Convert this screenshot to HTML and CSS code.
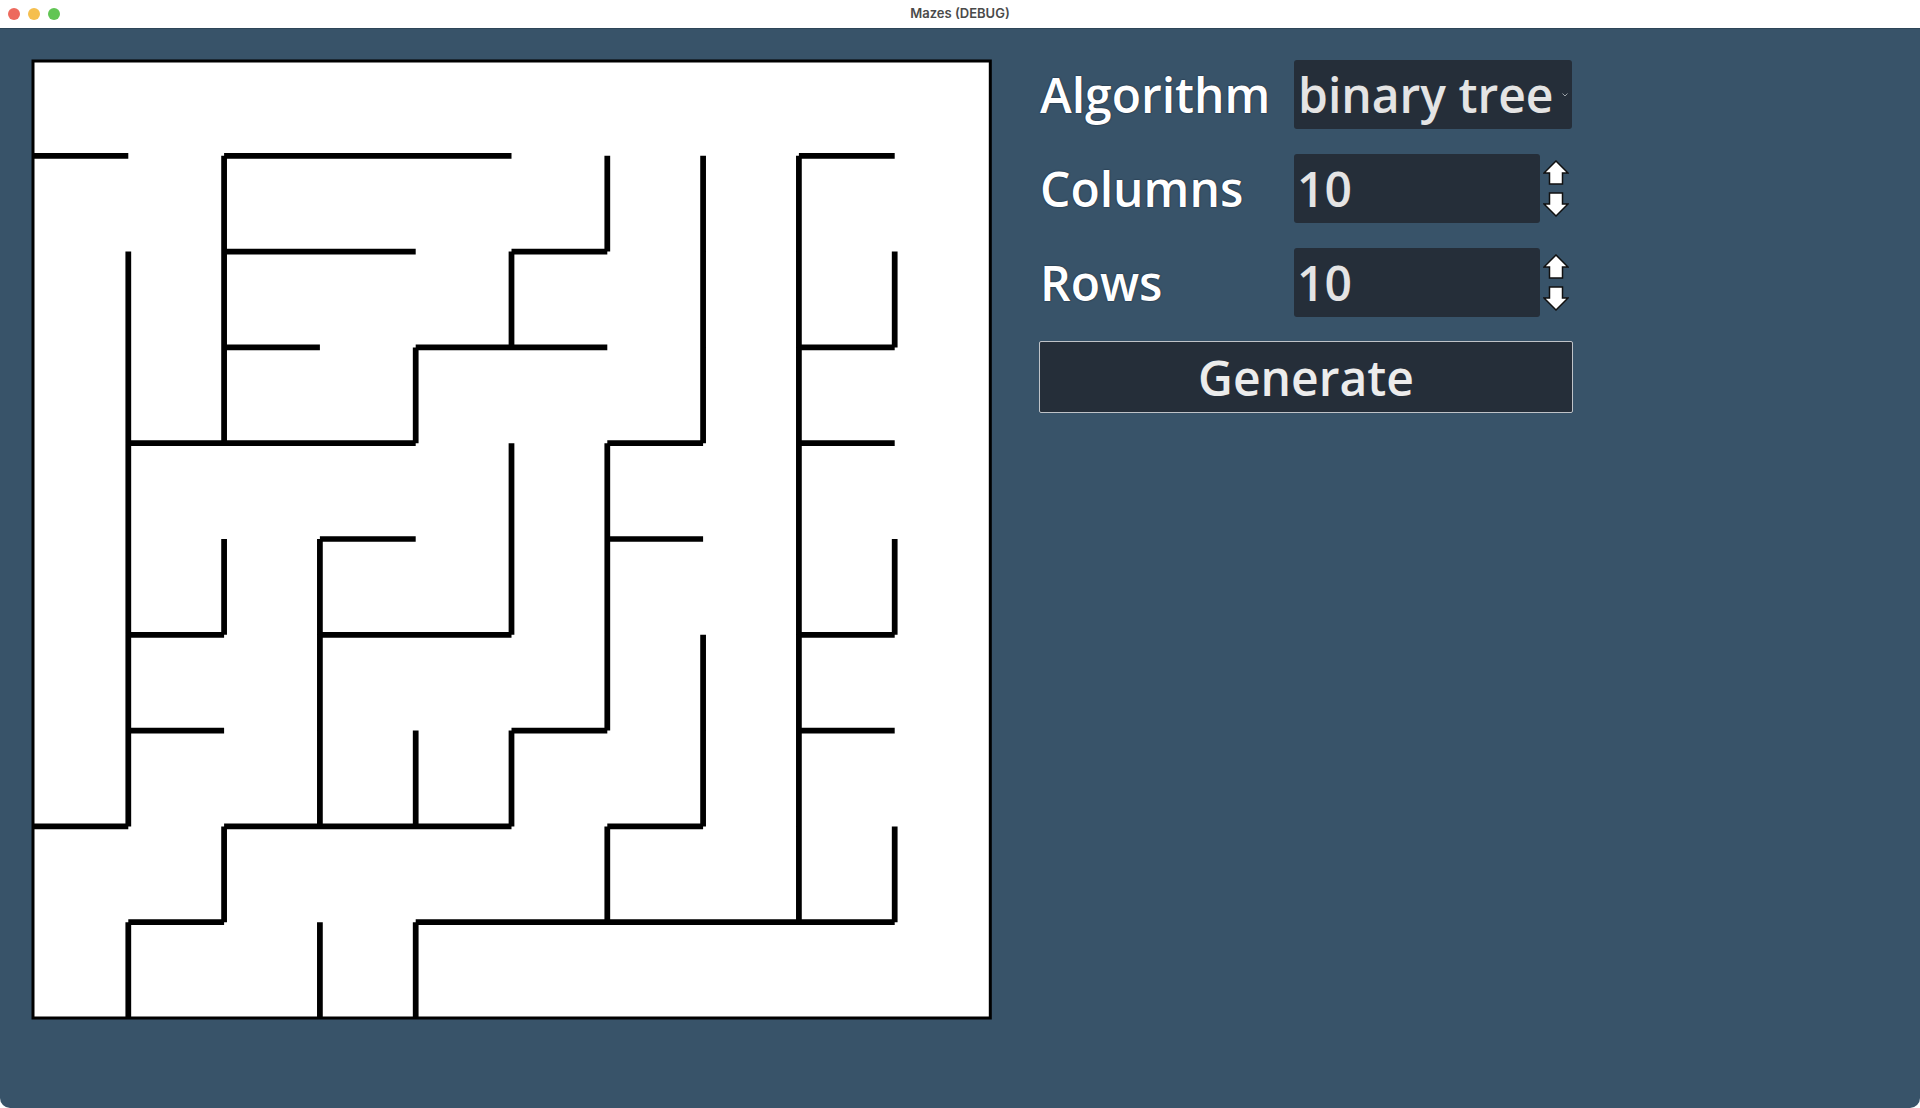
FILE: index.html
```html
<!DOCTYPE html>
<html lang="en">
<head>
<meta charset="utf-8">
<title>Mazes (DEBUG)</title>
<link rel="stylesheet" href="styles.css">
</head>
<body>
<div class="window">
  <header class="titlebar">
    <div class="lights">
      <span class="light red"></span>
      <span class="light yellow"></span>
      <span class="light green"></span>
    </div>
    <div class="title">Mazes (DEBUG)</div>
  </header>
  <main class="content">
    <svg class="maze" width="964" height="964" viewBox="0 0 964 964">
      <rect x="3" y="3" width="957.3" height="957" fill="#ffffff" stroke="#000000" stroke-width="3"/>
      <g transform="translate(2.5 2) scale(95.8)" fill="none" stroke="#000000" stroke-width="0.06" stroke-linecap="butt">
        <path d="M0 1H1 M2 1H5 M8 1H9
                 M2 2H4 M5 2H6
                 M2 3H3 M4 3H6 M8 3H9
                 M1 4H4 M6 4H7 M8 4H9
                 M3 5H4 M6 5H7
                 M1 6H2 M3 6H5 M8 6H9
                 M1 7H2 M5 7H6 M8 7H9
                 M0 8H1 M2 8H5 M6 8H7
                 M1 9H2 M4 9H9"/>
        <path d="M1 2V8 M1 9V10
                 M2 1V4 M2 5V6 M2 8V9
                 M3 5V8 M3 9V10
                 M4 3V4 M4 7V8 M4 9V10
                 M5 2V3 M5 4V6 M5 7V8
                 M6 1V2 M6 4V7 M6 8V9
                 M7 1V4 M7 6V8
                 M8 1V9
                 M9 2V3 M9 5V6 M9 8V9"/>
      </g>
    </svg>
    <section class="panel">
      <div class="row">
        <div class="label">Algorithm</div>
        <div class="option">
          <span class="value">binary tree</span>
          <svg class="chevron" width="6" height="4" viewBox="0 0 6 4"><path d="M0.5 0.5 L3 3 L5.5 0.5" fill="none" stroke="#9aa0a6" stroke-width="1"/></svg>
        </div>
      </div>
      <div class="row">
        <div class="label">Columns</div>
        <div class="spin">
          <div class="spinbox"><span class="value">10</span></div>
          <svg class="arrows" width="26" height="58" viewBox="0 0 26 58">
            <polygon points="13,1 25,13 19.5,13 19.5,24 6.5,24 6.5,13 1,13" fill="#ffffff" stroke="#111111" stroke-width="1.5" stroke-linejoin="miter"/>
            <polygon points="6.5,33 19.5,33 19.5,44 25,44 13,56 1,44 6.5,44" fill="#ffffff" stroke="#111111" stroke-width="1.5" stroke-linejoin="miter"/>
          </svg>
        </div>
      </div>
      <div class="row">
        <div class="label">Rows</div>
        <div class="spin">
          <div class="spinbox"><span class="value">10</span></div>
          <svg class="arrows" width="26" height="58" viewBox="0 0 26 58">
            <polygon points="13,1 25,13 19.5,13 19.5,24 6.5,24 6.5,13 1,13" fill="#ffffff" stroke="#111111" stroke-width="1.5" stroke-linejoin="miter"/>
            <polygon points="6.5,33 19.5,33 19.5,44 25,44 13,56 1,44 6.5,44" fill="#ffffff" stroke="#111111" stroke-width="1.5" stroke-linejoin="miter"/>
          </svg>
        </div>
      </div>
      <button class="generate" type="button">Generate</button>
    </section>
  </main>
</div>
</body>
</html>
```

FILE: styles.css
```css
html, body {
  margin: 0;
  padding: 0;
  background: #ffffff;
}

.window {
  width: 1920px;
  height: 1108px;
  display: flex;
  flex-direction: column;
  overflow: hidden;
}

.titlebar {
  height: 28px;
  flex: 0 0 28px;
  background: #ffffff;
  display: flex;
  align-items: center;
  position: relative;
}

.lights {
  display: flex;
  gap: 8px;
  padding-left: 8px;
}

.light {
  width: 12px;
  height: 12px;
  border-radius: 50%;
  display: block;
}

.light.red { background: #ed6a5e; }
.light.yellow { background: #f5bf4f; }
.light.green { background: #61c554; }

.title {
  position: absolute;
  left: 0;
  right: 0;
  top: 0;
  line-height: 26px;
  text-align: center;
  font-family: Inter, "Liberation Sans", sans-serif;
  font-weight: 600;
  font-size: 13px;
  color: #4a4a4a;
}

.content {
  flex: 1 1 auto;
  background: #385369;
  border-top: 1px solid #2e4558;
  border-radius: 0 0 10px 10px;
  display: flex;
  align-items: flex-start;
  padding: 29px 0 0 30px;
  gap: 45px;
}

.maze {
  display: block;
  flex: 0 0 auto;
}

.panel {
  margin-top: 2px;
  width: 534px;
  display: flex;
  flex-direction: column;
  gap: 25px;
  font-family: "Open Sans", "Noto Sans", sans-serif;
  font-weight: 600;
  font-size: 48px;
}

.row {
  display: flex;
  height: 69px;
}

.label {
  width: 255px;
  flex: 0 0 255px;
  line-height: 70px;
  padding-left: 1px;
  box-sizing: border-box;
  color: #ffffff;
  text-shadow: 0 0 1.5px rgba(0, 10, 25, 0.9);
  white-space: nowrap;
}

.option {
  width: 278px;
  height: 69px;
  background: #252e39;
  border-radius: 3px;
  display: flex;
  align-items: center;
  position: relative;
  padding-left: 4px;
  box-sizing: border-box;
}

.value {
  line-height: 70px;
  color: #e4e4e4;
  white-space: nowrap;
}

.chevron {
  position: absolute;
  right: 4px;
  top: 33px;
}

.spin {
  display: flex;
  align-items: flex-start;
  gap: 3px;
}

.spinbox {
  width: 246px;
  height: 69px;
  background: #252e39;
  border-radius: 3px;
  padding-left: 3px;
  box-sizing: border-box;
}

.arrows {
  display: block;
  margin-top: 6px;
}

.generate {
  margin-top: -1px;
  height: 72px;
  width: 534px;
  background: #252e39;
  border: 1px solid #bfc3c8;
  border-radius: 2px;
  color: #ececec;
  font-family: "Open Sans", "Noto Sans", sans-serif;
  font-weight: 600;
  font-size: 48px;
  line-height: 69px;
  padding: 0;
  text-align: center;
}
```
